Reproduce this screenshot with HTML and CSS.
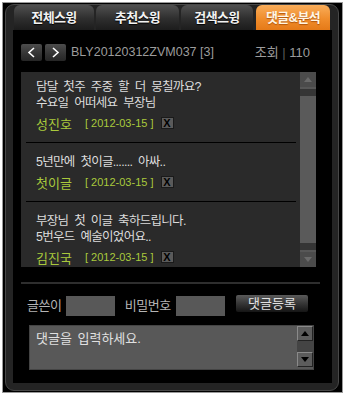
FILE: index.html
```html
<!DOCTYPE html>
<html lang="ko">
<head>
<meta charset="utf-8">
<link rel="stylesheet" href="styles.css">
</head>
<body>
<div class="outer">
  <div class="panel">
    <div class="tabs">
      <div class="tab t1">전체스윙</div>
      <div class="tab t2">추천스윙</div>
      <div class="tab t3">검색스윙</div>
      <div class="tab t4 active">댓글&amp;분석</div>
    </div>
    <div class="content">
      <div class="head">
        <span class="nav"><svg width="9" height="11" viewBox="0 0 9 11"><path d="M7 1 L2 5.5 L7 10" fill="none" stroke="#fff" stroke-width="1.6"/></svg></span>
        <span class="nav"><svg width="9" height="11" viewBox="0 0 9 11"><path d="M2 1 L7 5.5 L2 10" fill="none" stroke="#fff" stroke-width="1.6"/></svg></span>
        <span class="code">BLY20120312ZVM037 [3]</span>
        <span class="views">조회 <span class="bar">|</span> 110</span>
      </div>
      <div class="list">
        <div class="items">
          <div class="item first">
            <p class="txt">담달 첫주 주중 할 더 뭉칠까요?<br>수요일 어떠세요 부장님</p>
            <div class="meta"><span class="name">성진호</span><span class="date">[ 2012-03-15 ]</span><span class="del">X</span></div>
          </div>
          <div class="item">
            <p class="txt">5년만에 첫이글....... 아싸..</p>
            <div class="meta"><span class="name">첫이글</span><span class="date">[ 2012-03-15 ]</span><span class="del">X</span></div>
          </div>
          <div class="item">
            <p class="txt">부장님 첫 이글 축하드립니다.<br>5번우드 예술이었어요..</p>
            <div class="meta"><span class="name">김진국</span><span class="date">[ 2012-03-15 ]</span><span class="del">X</span></div>
          </div>
        </div>
        <div class="scroll">
          <div class="arrow"><svg width="8" height="5" viewBox="0 0 8 5"><path d="M0 5 L4 0 L8 5Z" fill="#6a6a6a"/></svg></div>
          <div class="band top"></div>
          <div class="track"></div>
          <div class="band bottom"></div>
          <div class="arrow"><svg width="8" height="5" viewBox="0 0 8 5"><path d="M0 0 L4 5 L8 0Z" fill="#6a6a6a"/></svg></div>
        </div>
      </div>
      <div class="rule"></div>
      <div class="form">
        <span class="label">글쓴이</span>
        <span class="input in1"></span>
        <span class="label l2">비밀번호</span>
        <span class="input in2"></span>
        <span class="btn">댓글등록</span>
      </div>
      <div class="memo">
        <div class="memo-text">댓글을 입력하세요.</div>
        <div class="memo-scroll">
          <div class="marrow"><svg width="8" height="5" viewBox="0 0 8 5"><path d="M0 5 L4 0 L8 5Z" fill="#000"/></svg></div>
          <div class="mband"></div>
          <div class="marrow"><svg width="8" height="5" viewBox="0 0 8 5"><path d="M0 0 L4 5 L8 0Z" fill="#000"/></svg></div>
        </div>
      </div>
    </div>
  </div>
</div>
</body>
</html>
```
FILE: styles.css
```css
* { box-sizing: border-box; }
html, body { margin: 0; padding: 0; background: #fff; }
body {
  font-family: "Liberation Sans", "Noto Sans CJK KR", sans-serif;
  font-size: 12px;
}
.outer {
  margin: 2px;
  width: 341px;
  height: 391px;
  border: 1px solid #9a9a9a;
  background: #000;
  padding: 1px 3px 1px 2px;
  display: flex;
}
.panel {
  flex: 1;
  border: 1px solid #484848;
  border-radius: 9px;
  background: #242424;
  display: flex;
  flex-direction: column;
}
.tabs {
  display: flex;
  height: 25px;
  padding-left: 8px;
}
.tab {
  height: 25px;
  border-radius: 6px 6px 0 0;
  background: linear-gradient(#505050, #2e2e2e 55%, #1c1c1c);
  color: #f2f2f2;
  font-weight: bold;
  font-size: 13px;
  line-height: 25px;
  text-align: center;
  text-shadow: 0 1px 1px #000;
  letter-spacing: -0.6px;
}
.t1 { width: 80px; }
.t2 { width: 83px; margin-left: 2px; }
.t3 { width: 72px; margin-left: 2px; }
.t4 { width: 74px; margin-left: 3px; }
.tab.active {
  background: linear-gradient(#f9ad5a, #f08d2c 55%, #e57a18);
  color: #fff6e6;
  text-shadow: 0 1px 1px #b0550a;
}
.content {
  margin-left: 7px;
  width: 319px;
  height: 353px;
  background: #000;
  display: flex;
  flex-direction: column;
}
.head {
  margin-top: 14px;
  height: 17px;
  padding-left: 8px;
  padding-right: 22px;
  display: flex;
  align-items: center;
}
.nav {
  width: 21px;
  height: 17px;
  margin-right: 3px;
  border-radius: 2px;
  background: linear-gradient(#4d4d4d, #333 60%, #262626);
  display: flex;
  align-items: center;
  justify-content: center;
}
.code {
  margin-left: 2px;
  color: #9c9c9c;
  font-size: 12.5px;
  line-height: 17px;
}
.views {
  margin-left: auto;
  color: #9c9c9c;
  font-size: 13px;
  line-height: 17px;
}
.views .bar { color: #5a5a5a; }
.list {
  margin-top: 11px;
  margin-left: 8px;
  width: 295px;
  height: 195px;
  display: flex;
  background: #2a2a2a;
  overflow: hidden;
}
.items {
  width: 279px;
  padding-left: 5px;
  padding-right: 4px;
}
.item {
  padding: 11px 0 10px 10px;
  border-top: 1px solid #000;
}
.item.first {
  padding-top: 7px;
  border-top: 0;
}
.txt {
  margin: 0;
  color: #dcdcdc;
  font-size: 12.5px;
  line-height: 16px;
  letter-spacing: -0.7px;
  word-spacing: 3px;
}
.meta {
  margin-top: 3px;
  height: 18px;
  display: flex;
  align-items: center;
}
.name {
  color: #a9c93c;
  font-size: 13px;
  width: 49px;
}
.date {
  color: #a9c93c;
  font-size: 11px;
}
.del {
  margin-left: 7px;
  width: 13px;
  height: 12px;
  background: #5a5a5a;
  border: 1px solid #1a1a1a;
  color: #000;
  font-size: 11px;
  font-weight: bold;
  line-height: 10px;
  text-align: center;
}
.scroll {
  width: 16px;
  display: flex;
  flex-direction: column;
  background: #575757;
}
.arrow {
  height: 15px;
  background: #4b4b4b;
  display: flex;
  align-items: center;
  justify-content: center;
}
.band {
  height: 7px;
  background: #353535;
}
.band.top { margin-top: 2px; }
.band.bottom { margin-bottom: 2px; }
.track {
  flex: 1;
  background: #5a5a5a;
}
.rule {
  margin-top: 15px;
  margin-left: 8px;
  width: 299px;
  height: 2px;
  background: #2e2e2e;
}
.form {
  margin-top: 11px;
  padding-left: 14px;
  display: flex;
  align-items: flex-start;
  height: 21px;
}
.label {
  color: #b4b4b4;
  font-size: 13px;
  line-height: 20px;
  margin-top: 1px;
  letter-spacing: -0.4px;
}
.input {
  margin-top: 1px;
  width: 49px;
  height: 20px;
  background: #585858;
}
.in1 { margin-left: 4px; }
.l2 { margin-left: 10px; }
.in2 { margin-left: 5px; }
.btn {
  margin-left: 11px;
  width: 72px;
  height: 17px;
  border-radius: 2px;
  background: linear-gradient(#5a5a5a, #333 55%, #151515);
  color: #e2e2e2;
  font-size: 13px;
  line-height: 17px;
  text-align: center;
}
.memo {
  margin-top: 9px;
  margin-left: 16px;
  width: 285px;
  height: 45px;
  background: #585858;
  border: 1px solid #444;
  display: flex;
}
.memo-text {
  flex: 1;
  color: #e0e0e0;
  font-size: 13px;
  line-height: 16px;
  word-spacing: 2px;
  padding: 5px 6px;
}
.memo-scroll {
  width: 16px;
  display: flex;
  flex-direction: column;
}
.marrow {
  height: 15px;
  background: #5c5c5c;
  border-top: 1px solid #8a8a8a;
  border-left: 1px solid #8a8a8a;
  border-right: 1px solid #222;
  border-bottom: 1px solid #222;
  display: flex;
  align-items: center;
  justify-content: center;
}
.mband {
  height: 11px;
  background: #444;
}
```
